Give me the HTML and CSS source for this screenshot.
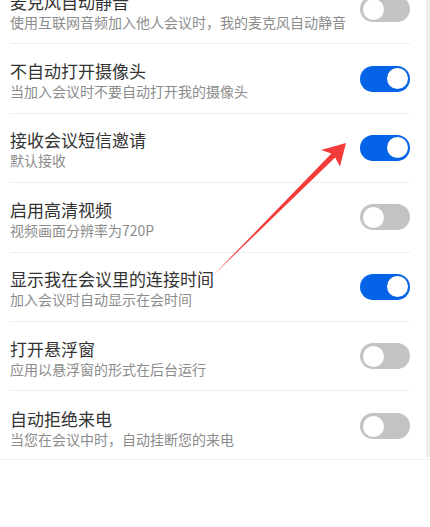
FILE: index.html
```html
<!DOCTYPE html>
<html lang="zh-CN">
<head>
<meta charset="utf-8">
<title>会议设置</title>
<link rel="stylesheet" href="styles.css">
</head>
<body>
<div class="page">
  <div class="panel">
    <ul class="list">
      <li class="row">
        <div class="text"><div class="title">麦克风自动静音</div><div class="sub">使用互联网音频加入他人会议时，我的麦克风自动静音</div></div>
        <span class="toggle"></span>
      </li>
      <li class="row">
        <div class="text"><div class="title">不自动打开摄像头</div><div class="sub">当加入会议时不要自动打开我的摄像头</div></div>
        <span class="toggle on"></span>
      </li>
      <li class="row">
        <div class="text"><div class="title">接收会议短信邀请</div><div class="sub">默认接收</div></div>
        <span class="toggle on"></span>
      </li>
      <li class="row">
        <div class="text"><div class="title">启用高清视频</div><div class="sub">视频画面分辨率为720P</div></div>
        <span class="toggle"></span>
      </li>
      <li class="row">
        <div class="text"><div class="title">显示我在会议里的连接时间</div><div class="sub">加入会议时自动显示在会时间</div></div>
        <span class="toggle on"></span>
      </li>
      <li class="row">
        <div class="text"><div class="title">打开悬浮窗</div><div class="sub">应用以悬浮窗的形式在后台运行</div></div>
        <span class="toggle"></span>
      </li>
      <li class="row last">
        <div class="text"><div class="title">自动拒绝来电</div><div class="sub">当您在会议中时，自动挂断您的来电</div></div>
        <span class="toggle"></span>
      </li>
    </ul>
  </div>
  <div class="scrollbar"></div>
</div>
<div class="rule"></div>
<svg class="arrow" width="430" height="527" viewBox="0 0 430 527">
  <polygon points="211.5,277 331.4,153.6 321,150 346,143 340,166.5 335.1,157.6" fill="#f43b3b"/>
</svg>
</body>
</html>
```
FILE: styles.css
```css
html, body {
  margin: 0;
  padding: 0;
  background: #ffffff;
}
body {
  width: 430px;
  height: 527px;
  overflow: hidden;
  position: relative;
  font-family: "Noto Sans CJK SC", "Noto Sans", sans-serif;
}
.page {
  display: flex;
  height: 457px;
  overflow: hidden;
}
.panel {
  width: 426px;
  background: #ffffff;
}
.scrollbar {
  width: 4px;
  background: #efefef;
}
.list {
  list-style: none;
  margin: -25px 0 0 0;
  padding: 0 16px 0 10px;
}
.row {
  box-sizing: border-box;
  height: 69.4px;
  border-bottom: 1px solid #eeeeee;
  display: flex;
  align-items: center;
  justify-content: space-between;
}
.row.last {
  border-bottom: none;
}
.text {
  padding-top: 3px;
}
.title {
  font-size: 17px;
  line-height: 22px;
  color: #333333;
}
.sub {
  font-size: 14px;
  line-height: 18px;
  color: #8c8c8c;
}
.toggle {
  position: relative;
  flex: none;
  width: 50px;
  height: 26px;
  border-radius: 13px;
  background: #c3c3c3;
}
.toggle::after {
  content: "";
  position: absolute;
  top: 2.5px;
  left: 2.5px;
  width: 21px;
  height: 21px;
  border-radius: 50%;
  background: #ffffff;
}
.toggle.on {
  background: #0463e6;
}
.toggle.on::after {
  left: auto;
  right: 2.5px;
}
.rule {
  margin-top: 2px;
  height: 1px;
  background: #f2f2f2;
}
.arrow {
  position: absolute;
  left: 0;
  top: 0;
  pointer-events: none;
}
```
